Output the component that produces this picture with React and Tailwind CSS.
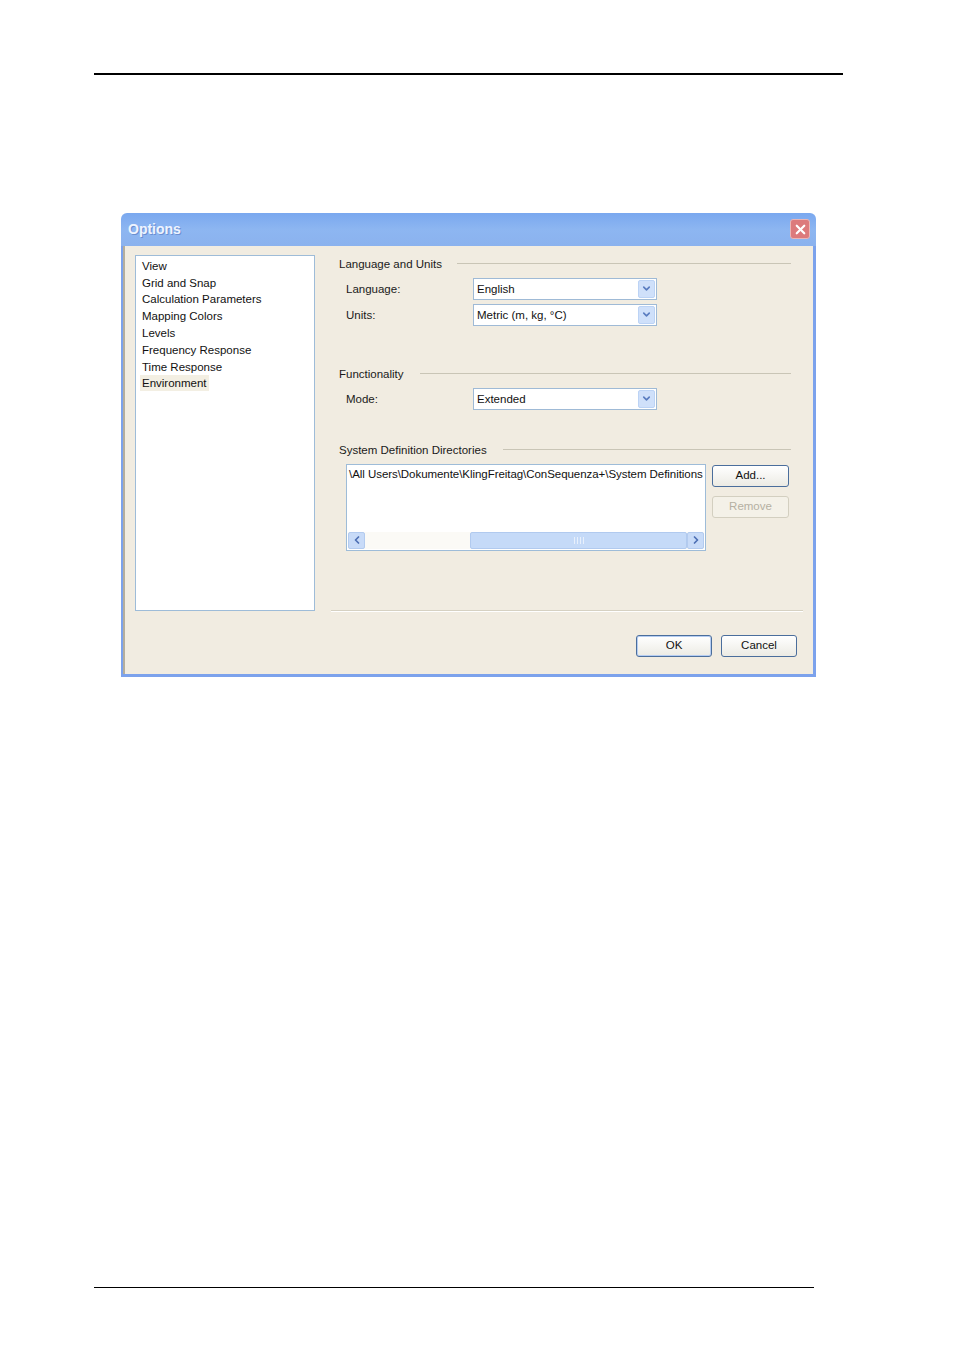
import { ChevronDown, ChevronLeft, ChevronRight, X } from "lucide-react";

const font = { fontFamily: '"Liberation Sans", Arial, sans-serif' };

const items = [
  "View",
  "Grid and Snap",
  "Calculation Parameters",
  "Mapping Colors",
  "Levels",
  "Frequency Response",
  "Time Response",
  "Environment",
];

function GroupHeader({ title, gap = "ml-[15px]" }) {
  return (
    <div className="flex items-center h-[14px] pl-[8px] pr-[12px]">
      <span className="text-[11.5px] leading-[14px] text-[#1a1a1a] whitespace-nowrap">{title}</span>
      <div className={`flex-1 h-px bg-[#c9c5b6] ${gap}`} />
    </div>
  );
}

function Combo({ value }) {
  return (
    <div className="w-[184px] h-[22px] bg-white border border-[#9fbad6] flex items-center">
      <span className="flex-1 pl-[3px] text-[11.5px] leading-[14px] text-[#111]">{value}</span>
      <div className="w-[17px] h-[18px] mr-px rounded-[2px] bg-[#cfe0fa] border border-[#bcd3f5] flex items-center justify-center">
        <ChevronDown size={11} strokeWidth={3.5} className="text-[#5a7cc0]" />
      </div>
    </div>
  );
}

function Row({ label, value, mt }) {
  return (
    <div className={`flex items-center pl-[15px] ${mt}`}>
      <span className="w-[127px] text-[11.5px] leading-[14px] text-[#1a1a1a]">{label}</span>
      <Combo value={value} />
    </div>
  );
}

function XpButton({ children, disabled, isDefault, className = "" }) {
  return (
    <div
      className={`h-[22px] rounded-[3px] flex items-center justify-center text-[11.5px] ${
        disabled
          ? "border border-[#d3cfc0] text-[#b4b0a2] bg-[#f4f1e8]"
          : "border border-[#4b6e9c] text-[#111] bg-gradient-to-b from-white to-[#ecebe4]"
      } ${isDefault ? "shadow-[inset_0_0_0_1px_#b6cdf2]" : ""} ${className}`}
    >
      {children}
    </div>
  );
}

export default function App() {
  return (
    <div className="w-[954px] h-[1350px] bg-white flex flex-col" style={font}>
      {/* page header rule */}
      <div className="ml-[94px] mt-[73px] w-[749px] h-[1.5px] bg-black" />

      {/* Options dialog */}
      <div className="ml-[121px] mt-[138px] w-[695px] h-[464px] flex flex-col">
        <div className="h-[33px] rounded-t-[6px] bg-gradient-to-b from-[#7aa8ef] via-[#8db6f1] to-[#8bb2ee] flex items-center justify-between pl-[7px] pr-[6px]">
          <span className="text-[14px] font-bold text-[#eef4ff] [text-shadow:1px_1px_0_#6a8fd0]">Options</span>
          <div className="w-[20px] h-[20px] rounded-[3px] bg-[#dc7a7c] border border-[#eab5b5] flex items-center justify-center">
            <X size={15} strokeWidth={3.5} className="text-white" />
          </div>
        </div>

        <div className="flex-1 flex border-l-[2px] border-r-[3px] border-b-[3px] border-[#7ca2ec]">
          <div className="flex-1 flex bg-[#f1ece1] border-l-[2px] border-[#b4ae9e]">
            {/* left nav list */}
            <div className="ml-[10px] mt-[9px] w-[180px] h-[356px] bg-white border border-[#9ebcd8] pt-[2px] pl-[4px]">
              {items.map((it) => (
                <div key={it} className="h-[16.8px] flex items-center">
                  <span
                    className={`text-[11.5px] leading-[16px] px-[2px] text-[#111] ${
                      it === "Environment" ? "bg-[#f3efe3]" : ""
                    }`}
                  >
                    {it}
                  </span>
                </div>
              ))}
            </div>

            {/* right panel */}
            <div className="ml-[16px] w-[472px] flex flex-col">
              <div className="mt-[11px]">
                <GroupHeader title="Language and Units" />
              </div>
              <Row label="Language:" value="English" mt="mt-[7px]" />
              <Row label="Units:" value="Metric (m, kg, °C)" mt="mt-[4px]" />

              <div className="mt-[41px]">
                <GroupHeader title="Functionality" gap="ml-[16px]" />
              </div>
              <Row label="Mode:" value="Extended" mt="mt-[7px]" />

              <div className="mt-[33px]">
                <GroupHeader title="System Definition Directories" gap="ml-[16px]" />
              </div>

              <div className="flex mt-[7px] pl-[15px]">
                <div className="w-[360px] h-[87px] bg-white border border-[#9ebcd8] flex flex-col">
                  <div className="flex-1 pl-[2px] pt-[2px] text-[11.5px] leading-[14px] text-[#111] whitespace-nowrap overflow-hidden tracking-[-0.05px]">
                    \All Users\Dokumente\KlingFreitag\ConSequenza+\System Definitions
                  </div>
                  <div className="h-[17px] mx-px mb-px flex bg-[#fbfaf6]">
                    <div className="w-[17px] h-[17px] rounded-[2px] bg-[#c8dbf8] border border-[#b3cbef] flex items-center justify-center">
                      <ChevronLeft size={12} strokeWidth={3.5} className="text-[#4d6fb4]" />
                    </div>
                    <div className="flex-1 flex">
                      <div className="w-[105px]" />
                      <div className="flex-1 rounded-[2px] bg-[#c5daf8] border border-[#b1caef] flex items-center justify-center gap-[2px]">
                        <div className="w-px h-[7px] bg-[#e8f0fc]" />
                        <div className="w-px h-[7px] bg-[#e8f0fc]" />
                        <div className="w-px h-[7px] bg-[#e8f0fc]" />
                        <div className="w-px h-[7px] bg-[#e8f0fc]" />
                      </div>
                    </div>
                    <div className="w-[17px] h-[17px] rounded-[2px] bg-[#c8dbf8] border border-[#b3cbef] flex items-center justify-center">
                      <ChevronRight size={12} strokeWidth={3.5} className="text-[#4d6fb4]" />
                    </div>
                  </div>
                </div>
                <div className="ml-[6px] flex flex-col">
                  <XpButton className="w-[77px] mt-px">Add...</XpButton>
                  <XpButton disabled className="w-[77px] mt-[9px]">Remove</XpButton>
                </div>
              </div>

              <div className="mt-[59px] h-px bg-[#d6d1c2]" />
              <div className="h-px bg-white" />

              <div className="flex justify-end gap-[9px] mt-[23px] pr-[6px]">
                <XpButton isDefault className="w-[76px]">OK</XpButton>
                <XpButton className="w-[76px]">Cancel</XpButton>
              </div>
            </div>
          </div>
        </div>
      </div>

      {/* page footer rule */}
      <div className="ml-[94px] mt-[610px] w-[720px] h-[1.5px] bg-black" />
    </div>
  );
}
